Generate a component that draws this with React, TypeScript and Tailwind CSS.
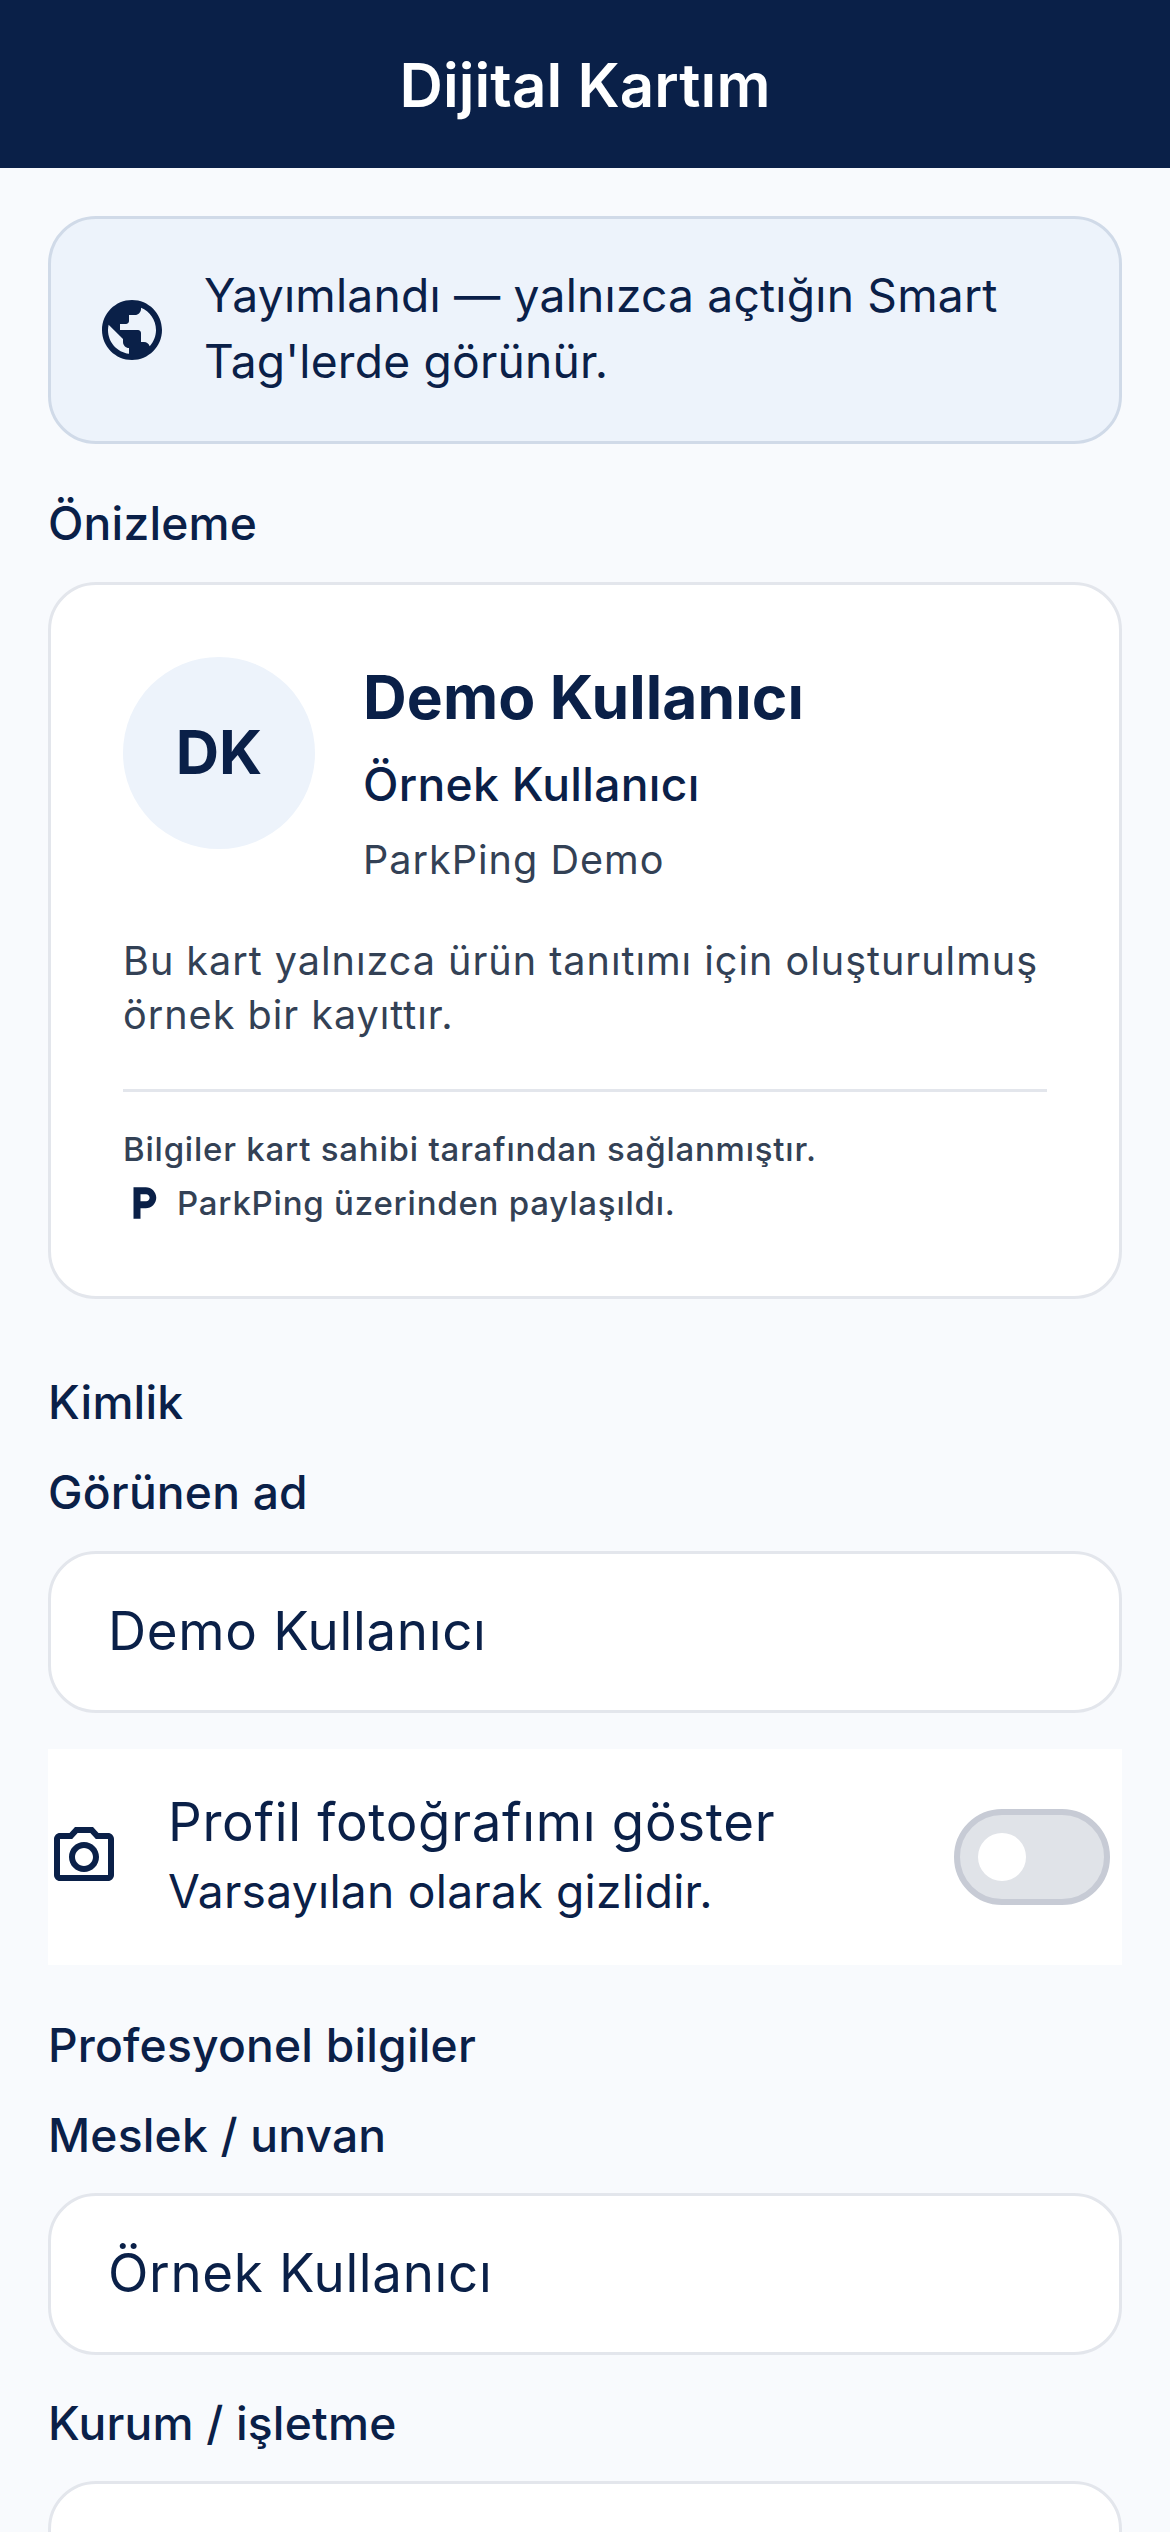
import { MdLocalParking, MdOutlinePhotoCamera, MdPublic } from 'react-icons/md';

function SectionLabel({ children, className = '' }: { children: string; className?: string }) {
  return <p className={`text-[46.2px] leading-[60px] font-medium tracking-[0.2px] text-[#0a2048] ${className}`}>{children}</p>;
}

function Field({ value = '', className = '' }: { value?: string; className?: string }) {
  return (
    <div className={`flex h-[162px] items-center rounded-[48px] border-[3px] border-[#e3e6ec] bg-white px-[57px] text-[52.8px] tracking-[0.7px] text-[#0a2048] ${className}`}>
      {value}
    </div>
  );
}

export default function App() {
  return (
    <div className="h-[2532px] overflow-hidden bg-[#f8fafd] font-['Inter',sans-serif] text-[#0a2048]">
      <header className="flex h-[168px] items-center justify-center bg-[#0a2048]">
        <h1 className="pt-[2px] text-[60px] leading-none font-semibold tracking-[0.1px] text-white">Dijital Kartım</h1>
      </header>

      <main className="flex flex-col px-[48px] pt-[48px]">
        <div className="flex h-[228px] items-center gap-[36px] rounded-[48px] border-[3px] border-[#d0dae8] bg-[#edf3fb] pl-[45px] pr-[45px]">
          <MdPublic className="shrink-0" size={72} />
          <p className="-mt-[4px] text-[46.2px] leading-[66px] tracking-[0.2px]">Yayımlandı — yalnızca açtığın Smart Tag'lerde görünür.</p>
        </div>

        <SectionLabel className="mt-[49px]">Önizleme</SectionLabel>

        <section className="mt-[29px] rounded-[48px] border-[3px] border-[#e3e6ec] bg-white px-[72px] pt-[72px] pb-[69px]">
          <div className="flex items-start gap-[48px]">
            <div className="flex h-[192px] w-[192px] shrink-0 items-center justify-center rounded-full bg-[#edf3fb] pb-[2px] text-[60px] font-bold">DK</div>
            <div>
              <h2 className="text-[60.5px] leading-[81px] font-bold tracking-[0.1px]">Demo Kullanıcı</h2>
              <p className="mt-[10px] text-[46.2px] leading-[72px] font-medium tracking-[0.3px]">Örnek Kullanıcı</p>
              <p className="mt-[10px] text-[39.6px] leading-[60px] tracking-[1px] text-[#334155]">ParkPing Demo</p>
            </div>
          </div>
          <p className="mt-[44px] text-[39.6px] leading-[54px] tracking-[0.98px] text-[#334155]">
            Bu kart yalnızca ürün tanıtımı için oluşturulmuş örnek bir kayıttır.
          </p>
          <div className="mt-[47px] h-[3px] bg-[#e3e6ec]" />
          <p className="mt-[33px] text-[33px] leading-[48px] font-medium tracking-[0.78px] text-[#334155]">Bilgiler kart sahibi tarafından sağlanmıştır.</p>
          <div className="mt-[6px] flex items-center gap-[12px]">
            <MdLocalParking className="shrink-0 text-[#0a2048]" size={42} />
            <p className="text-[33px] leading-[48px] font-medium tracking-[0.78px] text-[#334155]">ParkPing üzerinden paylaşıldı.</p>
          </div>
        </section>

        <SectionLabel className="mt-[73px]">Kimlik</SectionLabel>
        <SectionLabel className="mt-[30px]">Görünen ad</SectionLabel>
        <Field className="mt-[29px]" value="Demo Kullanıcı" />

        <div className="mt-[36px] flex h-[216px] items-center bg-white pr-[12px]">
          <MdOutlinePhotoCamera className="shrink-0" size={72} />
          <div className="ml-[48px] -mt-[5px] flex-1">
            <p className="text-[52.8px] leading-[72px] tracking-[0.7px]">Profil fotoğrafımı göster</p>
            <p className="text-[46.2px] leading-[66px] tracking-[0.25px]">Varsayılan olarak gizlidir.</p>
          </div>
          <div className="flex h-[96px] w-[156px] items-center rounded-full border-[6px] border-[#c7cbd5] bg-[#e0e3e8] pl-[18px]">
            <div className="h-[48px] w-[48px] rounded-full bg-white" />
          </div>
        </div>

        <SectionLabel className="mt-[50px]">Profesyonel bilgiler</SectionLabel>
        <SectionLabel className="mt-[30px]">Meslek / unvan</SectionLabel>
        <Field className="mt-[28px]" value="Örnek Kullanıcı" />

        <SectionLabel className="mt-[38px]">Kurum / işletme</SectionLabel>
        <Field className="mt-[28px]" />
      </main>
    </div>
  );
}
